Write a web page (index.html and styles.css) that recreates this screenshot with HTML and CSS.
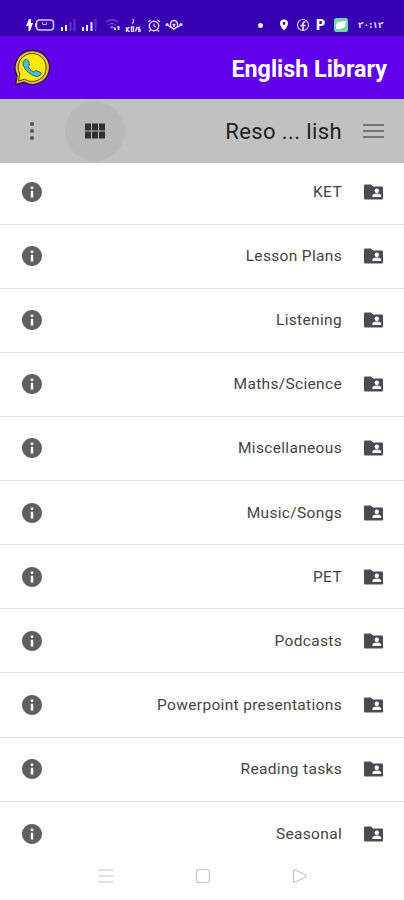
FILE: index.html
```html
<!DOCTYPE html>
<html lang="en">
<head>
    <meta charset="UTF-8">
    <meta name="viewport" content="width=device-width, initial-scale=1.0">
    <title>English Library</title>
    <link rel="stylesheet" href="styles.css">
</head>
<body>
    <!-- Shared icons -->
    <svg class="sprite" width="0" height="0">
        <symbol id="info" viewBox="0 0 24 24">
            <path d="M12 2C6.48 2 2 6.48 2 12s4.48 10 10 10 10-4.48 10-10S17.52 2 12 2zm1.2 15.4h-2.4v-6.6h2.4v6.6zm0-8.5h-2.4V6.5h2.4v2.4z"/>
        </symbol>
        <symbol id="folder" viewBox="0 0 19 16">
            <path d="M0 1.500Q0 .5 1 .5h6l2 2h9q1 0 1 1v11q0 1-1 1H1q-1 0-1-1z"/>
            <circle cx="12.800" cy="6.800" r="2.200" fill="#fff"/>
            <path d="M8.400 13v-1.300c0-1.500 2.900-2.300 4.400-2.300s4.400.8 4.400 2.300V13z" fill="#fff"/>
        </symbol>
    </svg>

    <div class="status-bar">
        <div class="status-left">
            <svg width="7" height="12" viewBox="0 0 7 12"><path d="M3 0h2v4h2L4 12H2.500V7H0z" fill="#fff"/></svg>
            <svg class="battery" width="20" height="12" viewBox="0 0 20 12"><rect x="1.500" y="1" width="17" height="10" rx="3" fill="none" stroke="#d5caf5" stroke-width="1.500"/><path d="M7.500 3v2.500h4V3" fill="none" stroke="#b9a6ef"/><path d="M.5 4v4" stroke="#d5caf5"/></svg>
            <svg class="signal" width="16" height="12" viewBox="0 0 16 12"><path d="M1 8h2v4H1zM5 6h2v6H5z" fill="#eee8ff"/><path d="M9.500 3h2v9h-2zM13.500 0h2v12h-2z" fill="#5b35c8"/></svg>
            <svg class="signal" width="16" height="12" viewBox="0 0 16 12"><path d="M1 8h2v4H1zM5 6h2v6H5zM9.500 3h2v9h-2z" fill="#eee8ff"/><path d="M13.500 0h2v12h-2z" fill="#5b35c8"/></svg>
            <svg class="wifi" width="16" height="12" viewBox="0 0 16 12"><path d="M1 3q6-5 12 0M3 6q4-3 8 0" fill="none" stroke="#6846cf" stroke-width="1.500"/><path d="M5 8q2-1.500 4 0L7 10z" fill="#9f88e2"/><path d="M10 8.500v2.500M13.500 7v4" stroke="#dcd3f7" stroke-width="2"/></svg>
            <svg class="speed" width="16" height="13" viewBox="0 0 16 13"><path d="M7 0h1.500v3L7 5" fill="none" stroke="#bdabed" stroke-width="1.300"/><path d="M1.500 8v5M4.500 8L2 10.500 4.500 13M6.500 8v5h2V8zM10.500 12.500L12 8M15 8.500h-1.500v2H15v2h-2" fill="none" stroke="#e1d9fa" stroke-width="1.400"/></svg>
            <svg class="alarm" width="14" height="13" viewBox="0 0 14 13"><circle cx="7" cy="7" r="4.700" fill="none" stroke="#e4dcfb" stroke-width="1.500"/><path d="M1 3l2.500-2M13 3l-2.500-2M7 4.500V7l2 1M3.500 11L2 12.500M10.500 11l1.500 1.500" fill="none" stroke="#e4dcfb" stroke-width="1.200"/></svg>
            <svg class="eye" width="18" height="12" viewBox="0 0 18 12"><path d="M5.500 5a3.500 3.500 0 0 1 7 0v2M5.500 5v2.500L9 10l3.500-2.500M9 5v3M7.500 5.500h3" fill="none" stroke="#e4dcfb" stroke-width="1.500"/><path d="M1.500 5.500L6 8.500M16.500 5.500L12 8.500" stroke="#e4dcfb" stroke-width="1.500"/><circle cx="2" cy="5.500" r="1.500" fill="#e4dcfb"/><circle cx="16" cy="5.500" r="1.500" fill="#e4dcfb"/></svg>
        </div>
        <div class="status-right">
            <span class="dot"></span>
            <svg class="pin" width="10" height="12" viewBox="0 0 10 12"><path fill-rule="evenodd" d="M5 .5a4 4 0 0 0-4 4C1 7.500 5 11.500 5 11.500s4-4 4-7a4 4 0 0 0-4-4zm0 2.600a1.400 1.400 0 1 1 0 2.800 1.400 1.400 0 0 1 0-2.800z" fill="#fff"/></svg>
            <svg class="fb" width="14" height="14" viewBox="0 0 14 14"><circle cx="7" cy="7" r="5.500" fill="none" stroke="#d8cdf7" stroke-width="1.200"/><path d="M9.500 4H8.500Q7 4 7 5.500v7M4.500 7.500h5" fill="none" stroke="#fff" stroke-width="1.500"/></svg>
            <span class="parking">P</span>
            <svg class="app" width="14" height="14" viewBox="0 0 14 14"><rect width="14" height="14" rx="2.500" fill="#76d3ad"/><path d="M2 6q2-2.500 5-2.500L12 3l-1 6-4 2H2z" fill="#fff"/></svg>
            <span class="time">٢٠:١٢</span>
        </div>
    </div>

    <header>
        <svg class="logo" width="38" height="38" viewBox="0 0 38 38">
            <path d="M19.500 1.500a17 17 0 1 1-8.500 31.700L2.500 35.500l1.500-9A17 17 0 0 1 19.500 1.500z" fill="#e9b94a" stroke="#2b174c" stroke-width="1.400"/>
            <path d="M19.500 4.500a14 14 0 1 1-8 25.700L5.500 32l1.300-7A14 14 0 0 1 19.500 4.500z" fill="#ffe90a" stroke="#5a4310" stroke-width="1"/>
            <path d="M11 11.500q2.500-2.500 4 0l1.500 3q.5 1.500-1.500 3 1.500 3.500 5.500 5.500 2-2 3.500-1.300l3.500 1.800q1.500 1-.5 3-3 2.500-8-.5-7-4-9-10-.5-3 1-4.500z" fill="#42bfdc" stroke="#285d65" stroke-width=".9"/>
        </svg>
        <h1>English Library</h1>
    </header>

    <div class="toolbar">
        <svg class="more" width="6" height="20" viewBox="0 0 6 20" fill="#555"><circle cx="3" cy="3" r="2.100"/><circle cx="3" cy="10" r="2.100"/><circle cx="3" cy="17" r="2.100"/></svg>
        <div class="grid-btn">
            <svg width="20" height="16" viewBox="0 0 20 16" fill="#303030"><path d="M0 .5h6v7H0zM7 .5h6v7H7zM14 .5h6v7h-6zM0 8.500h6v7H0zM7 8.500h6v7H7zM14 8.500h6v7h-6z"/></svg>
        </div>
        <h2>Reso ... lish</h2>
        <svg class="menu" width="21" height="16" viewBox="0 0 21 16"><path d="M0 2h21M0 8h21M0 14h21" stroke="#757575" stroke-width="1.800"/></svg>
    </div>

    <ul class="list">
        <li><svg class="info"><use href="#info"/></svg><span>KET</span><svg class="folder"><use href="#folder"/></svg></li>
        <li><svg class="info"><use href="#info"/></svg><span>Lesson Plans</span><svg class="folder"><use href="#folder"/></svg></li>
        <li><svg class="info"><use href="#info"/></svg><span>Listening</span><svg class="folder"><use href="#folder"/></svg></li>
        <li><svg class="info"><use href="#info"/></svg><span>Maths/Science</span><svg class="folder"><use href="#folder"/></svg></li>
        <li><svg class="info"><use href="#info"/></svg><span>Miscellaneous</span><svg class="folder"><use href="#folder"/></svg></li>
        <li><svg class="info"><use href="#info"/></svg><span>Music/Songs</span><svg class="folder"><use href="#folder"/></svg></li>
        <li><svg class="info"><use href="#info"/></svg><span>PET</span><svg class="folder"><use href="#folder"/></svg></li>
        <li><svg class="info"><use href="#info"/></svg><span>Podcasts</span><svg class="folder"><use href="#folder"/></svg></li>
        <li><svg class="info"><use href="#info"/></svg><span>Powerpoint presentations</span><svg class="folder"><use href="#folder"/></svg></li>
        <li><svg class="info"><use href="#info"/></svg><span>Reading tasks</span><svg class="folder"><use href="#folder"/></svg></li>
        <li><svg class="info"><use href="#info"/></svg><span>Seasonal</span><svg class="folder"><use href="#folder"/></svg></li>
    </ul>

    <nav>
        <svg width="16" height="16" viewBox="0 0 16 16"><path d="M0 2h15M0 8h15M0 14h15"/></svg>
        <svg width="16" height="16" viewBox="0 0 16 16"><rect x="1.500" y="1.500" width="13" height="13" rx="2.500"/></svg>
        <svg width="16" height="16" viewBox="0 0 16 16"><path d="M1.500 3v10q0 2 2 1l10-5q1.500-1 0-2l-10-5q-2-1-2 1z"/></svg>
    </nav>
</body>
</html>
```
FILE: styles.css
```css
body {
    font-family: Roboto, sans-serif;
    margin: 0;
    padding: 0;
    height: 900px;
    display: flex;
    flex-direction: column;
    background-color: #fefefe;
    color: #444;
    overflow: hidden;
}

h1, h2 {
    margin: 0;
}

svg {
    display: block;
    flex-shrink: 0;
}

.sprite {
    position: absolute;
}

.status-bar {
    box-sizing: border-box;
    height: 36px;
    padding: 15px 24px 0 26px;
    display: flex;
    justify-content: space-between;
    flex-shrink: 0;
    background-color: #3900b1;
    color: white;
}

.status-left, .status-right {
    display: flex;
    align-items: center;
    height: 20px;
}

.battery {
    margin-left: 2px;
}

.signal {
    margin-left: 5px;
}

.wifi {
    margin-left: 8px;
}

.speed {
    margin-left: 4px;
}

.alarm {
    margin-left: 6px;
}

.eye {
    margin-left: 4px;
}

.dot {
    width: 5px;
    height: 5px;
    border-radius: 50%;
    background-color: #f0eaff;
}

.pin {
    margin-left: 16px;
}

.fb {
    margin-left: 7px;
}

.parking {
    width: 10px;
    margin-left: 6px;
    font-size: 14px;
    font-weight: 900;
    line-height: 20px;
}

.app {
    margin-left: 8px;
}

.time {
    width: 22px;
    margin-left: 10px;
    font-family: "DejaVu Sans", sans-serif;
    font-size: 9px;
    font-weight: 700;
    line-height: 18px;
    white-space: nowrap;
    direction: ltr;
    color: #d8cdf7;
}

header {
    box-sizing: border-box;
    height: 63px;
    padding: 0 17px 0 13px;
    display: flex;
    align-items: center;
    justify-content: space-between;
    flex-shrink: 0;
    background-color: #6100e8;
    color: white;
}

header h1 {
    font-size: 23.3px;
    font-weight: 700;
    line-height: 30px;
    padding-top: 3px;
}

.toolbar {
    box-sizing: border-box;
    height: 64px;
    padding: 0 20px 0 29px;
    display: flex;
    align-items: center;
    flex-shrink: 0;
    background-color: #c1c1c1;
}

.grid-btn {
    width: 60px;
    height: 60px;
    margin-left: 30px;
    border-radius: 50%;
    display: flex;
    align-items: center;
    justify-content: center;
    background-color: #b8b8b8;
}

.toolbar h2 {
    margin-left: auto;
    margin-right: 21px;
    font-size: 22px;
    font-weight: 400;
    letter-spacing: 0.4px;
    color: #222;
}

.list {
    list-style: none;
    margin: 0;
    padding: 0;
    height: 690px;
    flex-shrink: 0;
    overflow: hidden;
}

.list li {
    box-sizing: border-box;
    height: 64.15px;
    padding: 0 21px 0 20px;
    display: flex;
    align-items: center;
    border-bottom: 1px solid #e2e2e2;
}

/* first row is partly scrolled under the toolbar */
.list li:first-child {
    height: 61.5px;
    padding-bottom: 3px;
}

.list li:last-child {
    border-bottom: none;
}

.list span {
    margin-left: auto;
    margin-right: 22px;
    font-size: 15.5px;
    letter-spacing: 0.33px;
}

.info {
    width: 24px;
    height: 24px;
    fill: #606060;
}

.folder {
    width: 19px;
    height: 16px;
    fill: #494c53;
}

nav {
    height: 46px;
    padding: 0 96px 0 98px;
    display: flex;
    align-items: center;
    justify-content: space-between;
}

nav svg {
    fill: none;
    stroke: #c6c6c6;
    stroke-width: 1.2;
}
```
